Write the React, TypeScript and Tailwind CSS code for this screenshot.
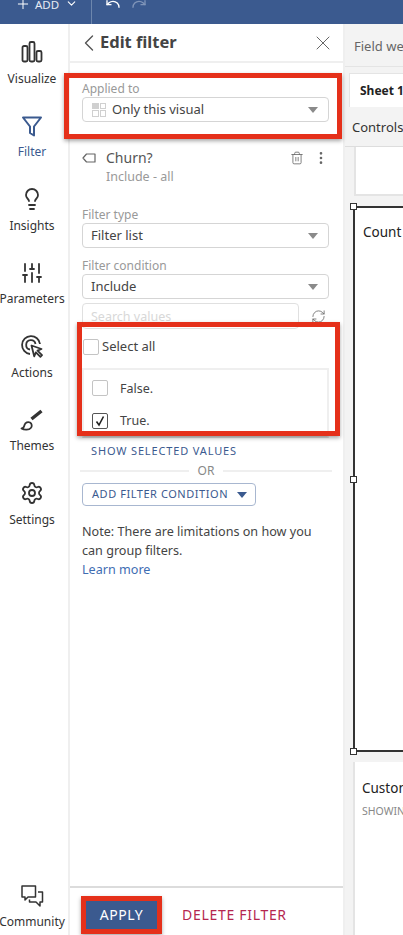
import { ChevronDown, ChevronLeft, Lightbulb, MoreVertical, Plus, Redo, RefreshCw, Settings, SlidersVertical, Trash2, Undo, X } from 'lucide-react';
import type { ReactNode } from 'react';

function VisualizeIcon() {
    return (
        <svg width="24" height="24" viewBox="0 0 24 24" fill="none" stroke="currentColor" strokeWidth="1.8">
            <rect x="2.5" y="6" width="5" height="15.5" rx="1.5" />
            <rect x="9.5" y="2" width="5" height="19.5" rx="1.5" />
            <rect x="16.5" y="11" width="5" height="10.5" rx="1.5" />
        </svg>
    );
}

function FunnelIcon() {
    return (
        <svg width="24" height="24" viewBox="0 0 24 24" fill="none" stroke="currentColor" strokeWidth="2">
            <path d="M3 3.5h18l-7 9v9l-4-2.5v-6.5z" strokeLinejoin="round" />
        </svg>
    );
}

function ActionsIcon() {
    return (
        <svg width="24" height="24" viewBox="0 0 24 24" fill="none" stroke="currentColor" strokeWidth="1.8">
            <path d="M10 20a9 9 0 1 1 10-10" />
            <path d="M10 15.5a4.7 4.7 0 1 1 5.5-5.5" />
            <path d="M11.5 11.5l10 3.5-4 1.7 4.5 4.5-1.6 1.6-4.5-4.5-1.7 4z" fill="white" strokeLinejoin="round" />
        </svg>
    );
}

function BrushIcon() {
    return (
        <svg width="24" height="24" viewBox="0 0 24 24" fill="none" stroke="currentColor">
            <path d="M21.5 3 11.5 11" strokeWidth="3.4" />
            <path d="M1.5 20.5c2.5 0 2.3-1.300 3-3.500.8-2.500 3.500-3.500 5.500-2.500 2 1.200 2.300 3.800.8 5.500-1.700 2-6.300 2.300-9.300.5z" strokeWidth="1.8" strokeLinejoin="round" />
        </svg>
    );
}

function CommunityIcon() {
    return (
        <svg width="24" height="24" viewBox="0 0 24 24" fill="none" stroke="currentColor" strokeWidth="1.5" strokeLinejoin="round">
            <path d="M2 2h13.500v11H8l-3 3v-3H2z" />
            <path d="M18 8h4.500v10H20v4l-4-4H9.500v-2.500" />
        </svg>
    );
}

const navItems: { label: string; icon: ReactNode; active?: boolean }[] = [
    { label: 'Visualize', icon: <VisualizeIcon /> },
    { label: 'Filter', icon: <FunnelIcon />, active: true },
    { label: 'Insights', icon: <Lightbulb size={24} strokeWidth={1.8} /> },
    { label: 'Parameters', icon: <SlidersVertical size={24} strokeWidth={1.8} /> },
    { label: 'Actions', icon: <ActionsIcon /> },
    { label: 'Themes', icon: <BrushIcon /> },
    { label: 'Settings', icon: <Settings size={24} strokeWidth={1.8} /> },
];

function Caret({ className = 'border-t-[#8a8a8a]' }: { className?: string }) {
    return <span className={`w-0 h-0 border-x-[5px] border-x-transparent border-t-[6px] ${className}`} />;
}

function SelectBox({ text, grid }: { text: string; grid?: boolean }) {
    return (
        <div className="flex items-center h-[25px] border border-[#d5d5d5] rounded-[4px] pl-2 pr-[10px] text-[13px] text-[#444]">
            {grid && (
                <span className="grid grid-cols-2 gap-px w-[14px] h-[14px] ml-[1px] mr-[6px]">
                    <span className="bg-[#d0d0d0]" />
                    <span className="border border-[#d0d0d0]" />
                    <span className="border border-[#d0d0d0]" />
                    <span className="border border-[#d0d0d0]" />
                </span>
            )}
            <span className="flex-1">{text}</span>
            <Caret />
        </div>
    );
}

function Check({ checked }: { checked?: boolean }) {
    return (
        <span className={`flex items-center justify-center w-4 h-4 rounded-[2px] border ${checked ? 'border-[#555]' : 'border-[#c4c4c4]'}`}>
            {checked && (
                <svg width="12" height="12" viewBox="0 0 12 12" fill="none" stroke="#222" strokeWidth="1.6">
                    <path d="M2.500 6.500 L5 10 L9.500 1.500" />
                </svg>
            )}
        </span>
    );
}

function Handle({ className }: { className: string }) {
    return <span className={`absolute w-[7px] h-[7px] bg-white border border-[#333] ${className}`} />;
}

export default function App() {
    return (
        <div className="relative w-[403px] h-[935px] overflow-hidden bg-white flex flex-col font-['Noto_Sans',sans-serif] text-[#444]">
            {/* Top bar */}
            <div className="h-[24px] shrink-0 bg-[#3b5a8f] flex items-start text-white pl-[15px] overflow-hidden">
                <Plus size={16} strokeWidth={1.5} className="-mt-[4px]" />
                <span className="text-[11.500px] leading-[16px] ml-[4px] -mt-[3px] text-[#e6eaf2]">ADD</span>
                <ChevronDown size={13} className="ml-[6px] -mt-[3px]" />
                <span className="w-px h-[24px] bg-[#6d86ad] ml-[13px]" />
                <Undo size={16} className="ml-[13px] -mt-[4px]" />
                <Redo size={16} className="ml-[10px] -mt-[4px] text-[#7f94b8]" />
            </div>

            <div className="flex-1 flex min-h-0">
                {/* Left nav */}
                <div className="w-[70px] shrink-0 border-r-2 border-[#efefef] flex flex-col pt-[16px] pb-[5px] pr-[4px]">
                    {navItems.map((item) => (
                        <div key={item.label} className={`flex flex-col items-center h-[73.5px] ${item.active ? 'text-[#3b5a8f]' : 'text-[#333]'}`}>
                            {item.icon}
                            <span className="text-[12px] leading-[16px] mt-[6.500px] whitespace-nowrap">{item.label}</span>
                        </div>
                    ))}
                    <div className="mt-auto flex flex-col items-center text-[#333]">
                        <CommunityIcon />
                        <span className="text-[12px] leading-[16px] mt-[6px]">Community</span>
                    </div>
                </div>

                {/* Filter panel */}
                <div className="w-[273px] shrink-0 flex flex-col">
                    <div className="h-[39px] shrink-0 border-b-2 border-[#efefef] flex items-center pl-[5px] pr-[8px]">
                        <ChevronLeft size={28} strokeWidth={1.2} className="text-[#555]" />
                        <span className="text-[16.500px] font-bold text-[#444] -ml-[3px] flex-1">Edit filter</span>
                        <X size={24} strokeWidth={1} className="text-[#666]" />
                    </div>

                    <div className="flex-1 pl-[12px] pr-[14px] pt-[19px]">
                        <div className="text-[12px] leading-[14px] text-[#999] mb-[1px]">Applied to</div>
                        <SelectBox text="Only this visual" grid />

                        <div className="flex items-start mt-[27px] text-[#555]">
                            <svg width="14" height="10" viewBox="0 0 14 10" fill="none" stroke="#666" strokeWidth="1.2" className="mt-[4px]">
                                <path d="M1 5 L4.500 1 H13 V9 H4.500 Z" strokeLinejoin="round" />
                            </svg>
                            <div className="ml-[10px] flex-1">
                                <div className="text-[14px] leading-[18px]">Churn?</div>
                                <div className="text-[12.500px] leading-[16px] text-[#999] mt-[2px]">Include - all</div>
                            </div>
                            <Trash2 size={14} strokeWidth={1.4} className="mt-[2px] text-[#666]" />
                            <MoreVertical size={16} strokeWidth={2} className="ml-[9px] mt-[1px] text-[#666]" />
                        </div>

                        <div className="text-[12px] leading-[14px] text-[#999] mt-[23px] mb-[1px]">Filter type</div>
                        <SelectBox text="Filter list" />
                        <div className="text-[12px] leading-[14px] text-[#999] mt-[11px] mb-[1px]">Filter condition</div>
                        <SelectBox text="Include" />

                        <div className="flex items-center mt-[4px]">
                            <div className="flex-1 h-[26px] border border-[#e0e0e0] rounded-[4px] pl-2 text-[12.500px] leading-[26px] text-[#d8d8d8]">Search values</div>
                            <RefreshCw size={15} strokeWidth={1.3} className="ml-[12px] mr-[3px] text-[#666]" />
                        </div>

                        <div className="flex items-center h-[36px] pl-px gap-[3px] text-[13px] text-[#444]">
                            <Check />
                            <span>Select all</span>
                        </div>
                        <div className="h-[70px] mt-[3px] border-2 border-[#efefef] border-b-[#ddd] pl-[8px] text-[12.500px] text-[#444]">
                            <div className="flex items-center gap-[12px] h-[36px]">
                                <Check />
                                <span className="pt-[2px]">False.</span>
                            </div>
                            <div className="flex items-center gap-[12px] h-[29px]">
                                <Check checked />
                                <span className="pt-[2px]">True.</span>
                            </div>
                        </div>

                        <div className="text-[11px] leading-[14px] tracking-[0.850px] text-[#3b5a8f] ml-[9px] mt-[6px]">SHOW SELECTED VALUES</div>
                        <div className="flex items-center mt-[6px] text-[12px] leading-[14px] text-[#888] -ml-[2px] -mr-[3px]">
                            <span className="flex-1 h-[2px] bg-[#efefef]" />
                            <span className="px-[9px]">OR</span>
                            <span className="flex-1 h-[2px] bg-[#efefef]" />
                        </div>
                        <div className="inline-flex items-center h-[23px] mt-[5px] pl-[9px] pr-[8px] gap-[9px] border border-[#a8b7d0] rounded-[4px] text-[11px] tracking-[0.550px] text-[#3b5a8f]">
                            ADD FILTER CONDITION
                            <Caret className="border-t-[#3b5a8f]" />
                        </div>

                        <p className="text-[12.600px] leading-[19px] text-[#444] mt-[16px]">
                            Note: There are limitations on how you can group filters.
                        </p>
                        <div className="text-[12.600px] leading-[19px] text-[#3f6db3]">Learn more</div>
                    </div>

                    <div className="h-[49px] shrink-0 border-t-2 border-[#dcdcdc] flex items-start pt-[13px] pl-[16px]">
                        <div className="w-[71px] h-[28px] bg-[#3b5a8f] text-white text-[14px] leading-[27px] text-center tracking-[0.600px]">APPLY</div>
                        <span className="ml-[25px] text-[14px] leading-[27px] tracking-[0.700px] text-[#b5264f]">DELETE FILTER</span>
                    </div>
                </div>

                {/* Sheet area */}
                <div className="flex-1 min-w-0 border-l-2 border-[#efefef] bg-[#f3f3f3] flex flex-col overflow-hidden">
                    <div className="h-[43px] shrink-0 pl-[9px] pt-[3px] flex items-center text-[13px] text-[#666] whitespace-nowrap border-b border-[#e4e4e4]">Field wells</div>
                    <div className="h-[80px] shrink-0 border-b border-[#ddd]">
                        <div className="ml-[4px] mt-[6px] w-[70px] h-[34px] bg-white border-l border-t border-[#e4e4e4] pl-[10px] text-[12px] leading-[34px] font-bold text-[#222] whitespace-nowrap">Sheet 1</div>
                        <div className="pl-[7px] mt-[11px] text-[13px] leading-[18px] text-[#333] whitespace-nowrap">Controls</div>
                    </div>
                    <div className="flex-1 flex flex-col pl-[8px] min-h-0">
                        <div className="h-[49px] shrink-0 bg-white border-l-2 border-b-2 border-[#e4e4e4] ml-[1px]" />
                        <div className="relative h-[546px] mt-[10px] shrink-0 bg-white border-2 border-r-0 border-[#333]">
                            <div className="pl-[8px] pt-[15px] text-[13.500px] leading-[18px] text-[#222]">Count</div>
                            <Handle className="-left-[5px] -top-[5px]" />
                            <Handle className="-left-[5px] top-[268px]" />
                            <Handle className="-left-[5px] -bottom-[5px]" />
                        </div>
                        <div className="flex-1 mt-[10px] bg-white border-l-2 border-[#e4e4e4] pl-[7px] pt-[17px] whitespace-nowrap">
                            <div className="text-[13.500px] leading-[18px] text-[#222]">Customer</div>
                            <div className="text-[10.500px] leading-[14px] mt-[7px] text-[#888]">SHOWING</div>
                        </div>
                    </div>
                </div>
            </div>

            {/* Red annotation boxes */}
            <div className="absolute left-[64px] top-[73px] w-[278px] h-[66px] border-[5px] border-[#e5301a] shadow-[0_2px_4px_rgba(0,0,0,0.35)]" />
            <div className="absolute left-[77px] top-[322px] w-[263px] h-[114px] border-[5px] border-[#e5301a] shadow-[0_2px_4px_rgba(0,0,0,0.35)]" />
            <div className="absolute left-[81px] top-[896px] w-[81px] h-[38px] border-[5px] border-[#e5301a] shadow-[0_2px_4px_rgba(0,0,0,0.35)]" />
        </div>
    );
}
